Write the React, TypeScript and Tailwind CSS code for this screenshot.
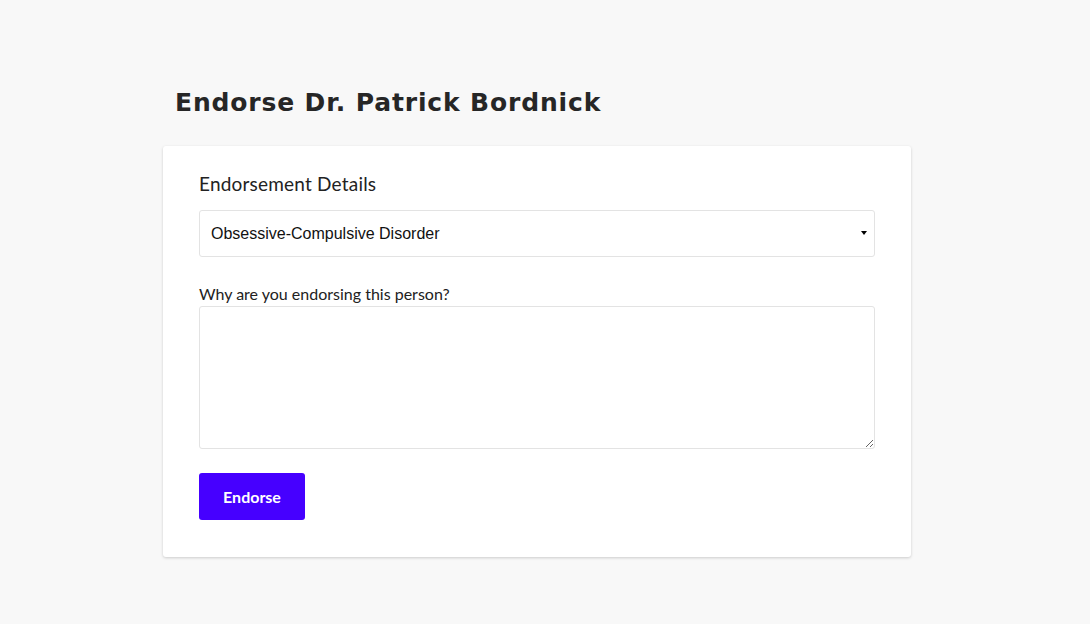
import { useState } from 'react'

const conditions = [
  'Obsessive-Compulsive Disorder',
  'Anxiety Disorder',
  'Depression',
  'Post-Traumatic Stress Disorder',
]

export default function App() {
  const [condition, setCondition] = useState(conditions[0])
  const [reason, setReason] = useState('')

  return (
    <div className="min-h-[624px] bg-[#f8f8f8] pt-[87px] font-['Lato',sans-serif] text-[#222]">
      <div className="ml-[163px] w-[748px]">
        <h1 className="ml-[12px] font-['DejaVu_Sans',sans-serif] text-[25px] font-bold leading-8 tracking-[0.85px] text-[#262626]">
          Endorse Dr. Patrick Bordnick
        </h1>

        <form
          className="mt-[27px] rounded-[3px] bg-white px-9 pt-[26px] pb-[37px] shadow-[0_1px_3px_rgba(0,0,0,0.18)]"
          onSubmit={(e) => e.preventDefault()}
        >
          <h2 className="text-[19px] leading-6 tracking-[0.2px] text-[#222]">Endorsement Details</h2>

          <div className="relative mt-[14px]">
            <select
              value={condition}
              onChange={(e) => setCondition(e.target.value)}
              className="h-[47px] w-full appearance-none rounded-[3px] border border-[#e3e3e3] bg-white pl-[11px] font-['Liberation_Sans',sans-serif] text-[16px] text-[#111] outline-none"
            >
              {conditions.map((c) => (
                <option key={c}>{c}</option>
              ))}
            </select>
            <span className="pointer-events-none absolute top-[21px] right-[8px] h-0 w-0 border-x-[3.5px] border-t-[4px] border-x-transparent border-t-black" />
          </div>

          <label className="mt-[27px] block text-[16px] leading-5 text-[#222]">
            Why are you endorsing this person?
            <textarea
              value={reason}
              onChange={(e) => setReason(e.target.value)}
              className="mt-[2px] block h-[143px] w-full rounded-[3px] border border-[#e3e3e3] bg-white p-2 text-[15px] outline-none"
            />
          </label>

          <button
            type="submit"
            className="mt-[24px] h-[47px] w-[106px] rounded-[3px] bg-[#4600ff] text-[16px] font-bold text-white"
          >
            Endorse
          </button>
        </form>
      </div>
    </div>
  )
}
